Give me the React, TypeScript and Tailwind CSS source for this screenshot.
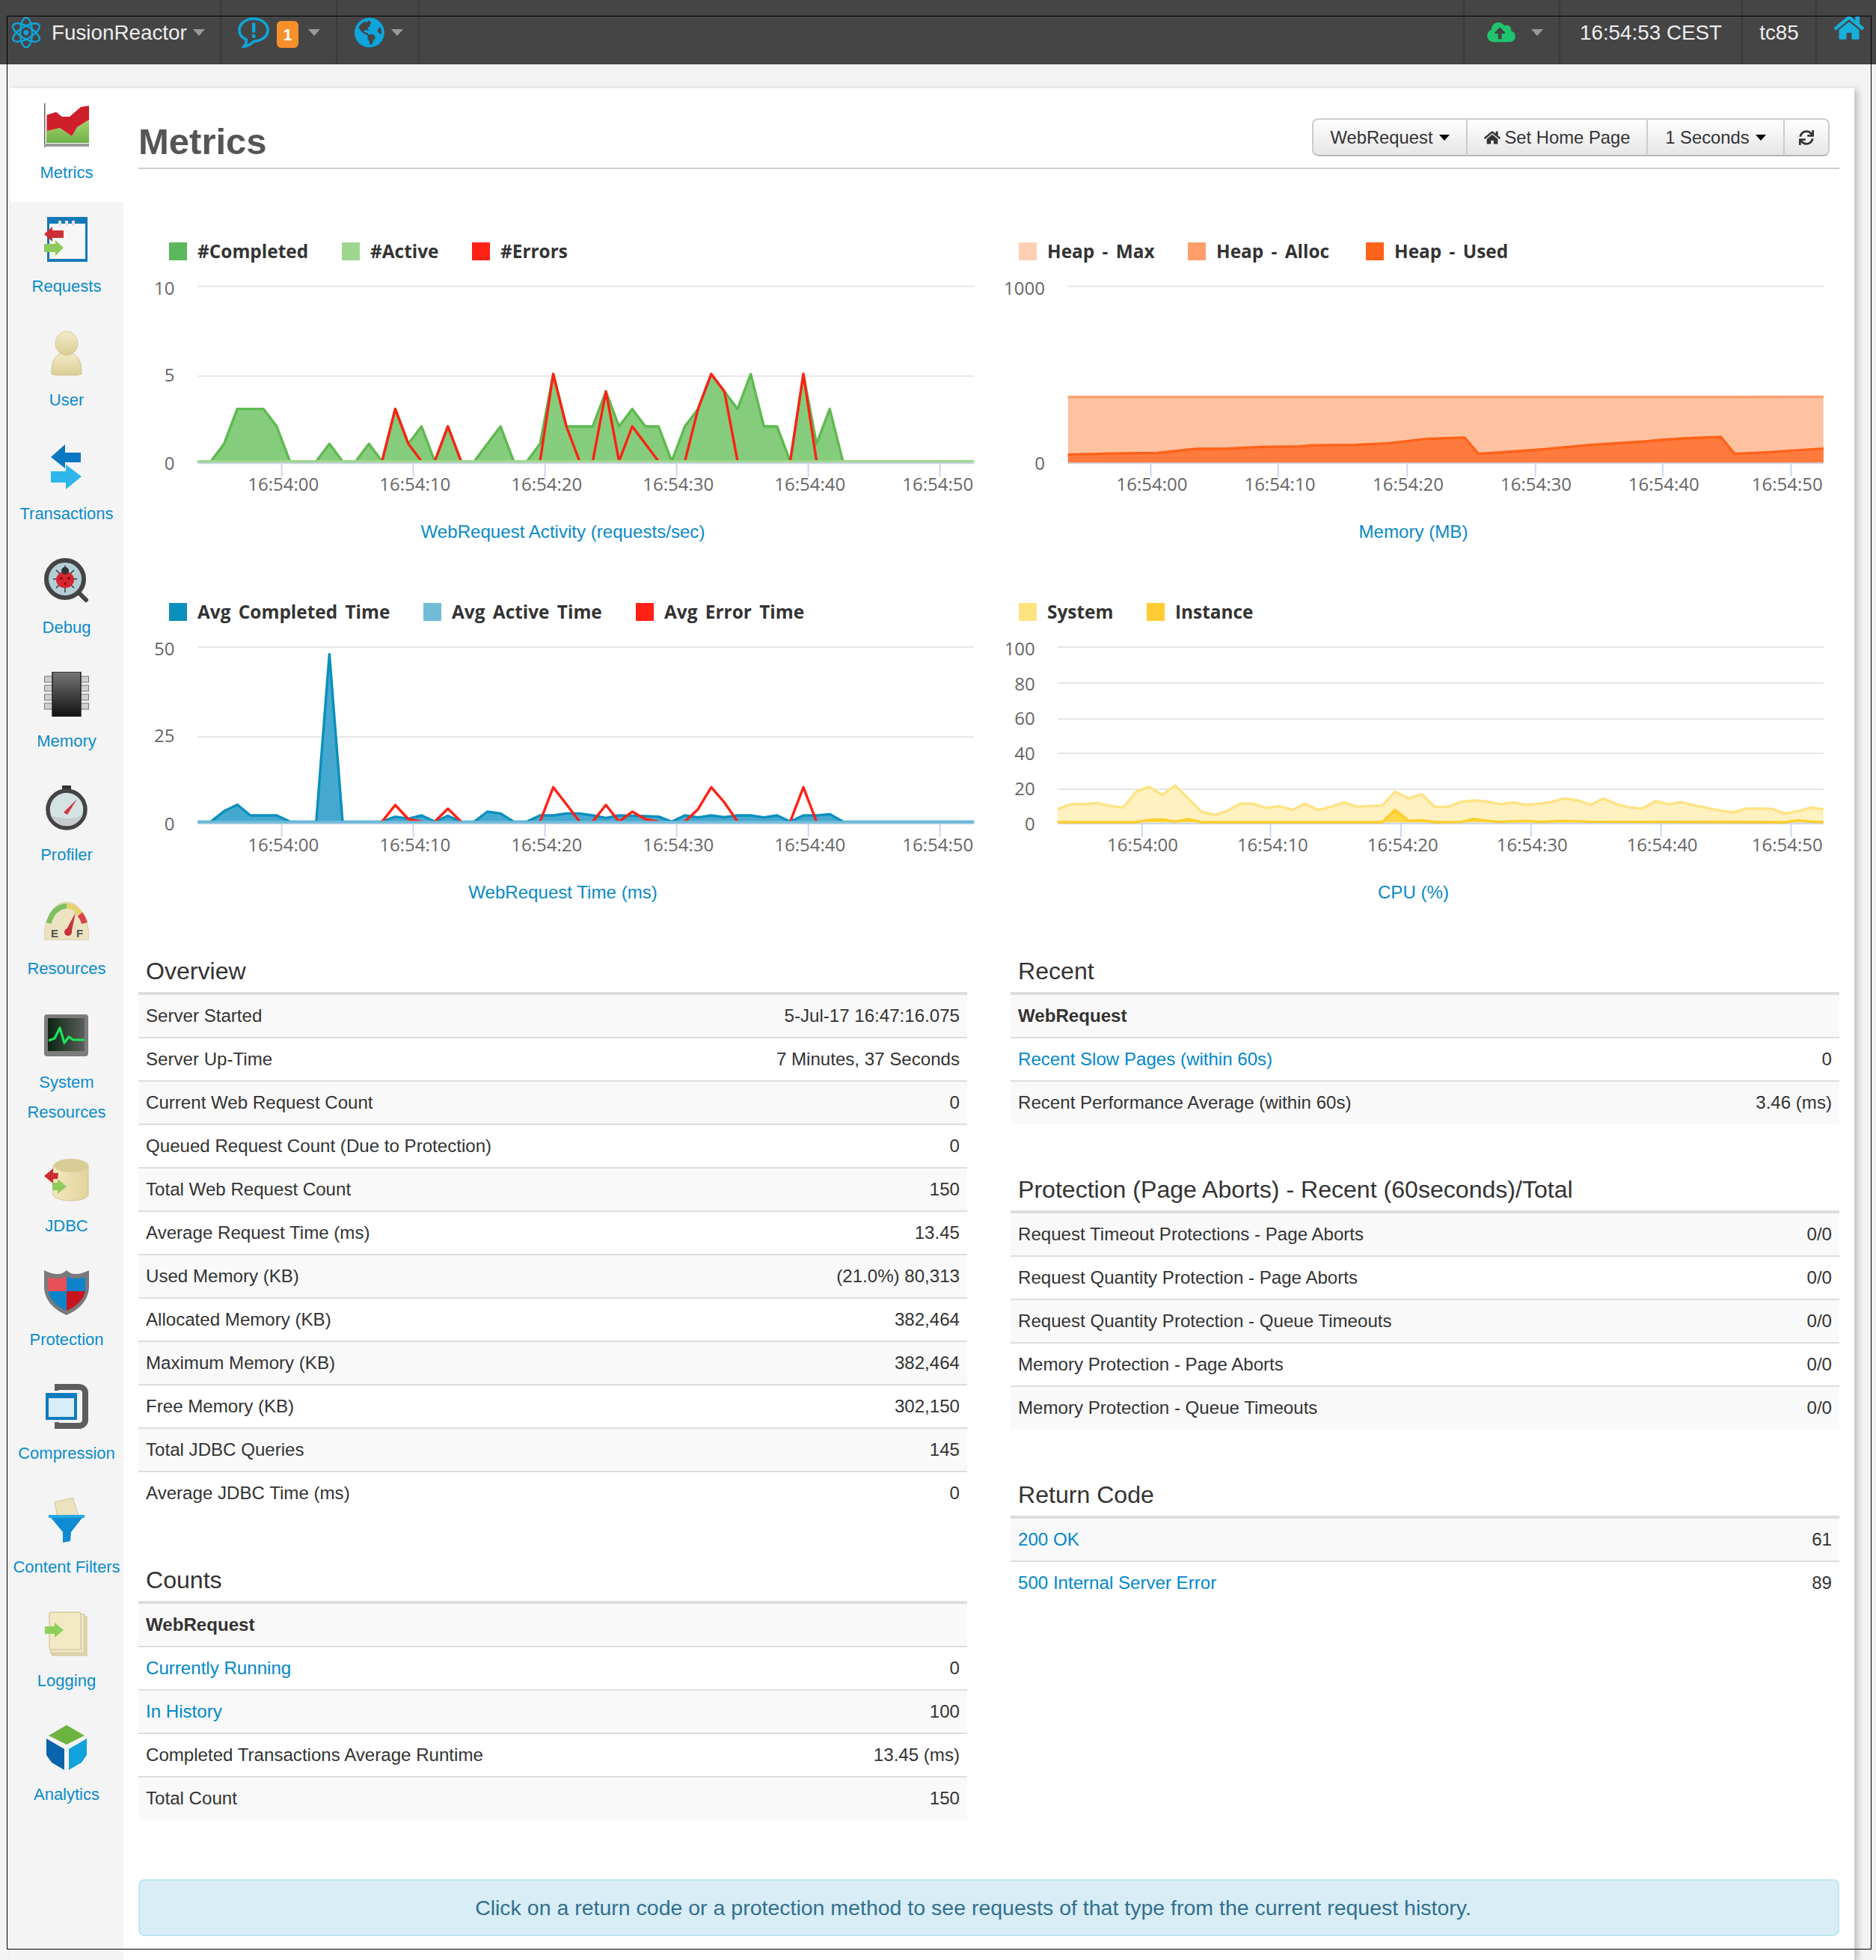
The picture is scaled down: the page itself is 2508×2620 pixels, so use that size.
import React from "react";
import { FaHome, FaSync, FaCloudUploadAlt, FaGlobeAmericas } from "react-icons/fa";

type Pt = [number, number];
const pts = (a: Pt[]) => a.map((p) => p.join(",")).join(" ");
const SX = 1150 / 1568;
const SY = 1 / 3;

function Area({ data, base, fill, line, close = true }: { data: Pt[]; base: number; fill?: string; line: string; close?: boolean }) {
  const first = data[0];
  const last = data[data.length - 1];
  return (
    <g>
      {fill && close && <polygon points={pts([[first[0], base], ...data, [last[0], base]])} fill={fill} />}
      <polyline points={pts(data)} fill="none" stroke={line} strokeWidth={3.4} strokeLinejoin="round" vectorEffect="non-scaling-stroke" />
    </g>
  );
}

type ChartDef = {
  ox: number;
  oy: number;
  top: number;
  cellX: number;
  grids: number[];
  axisY: number;
  x0: number;
  x1: number;
  yLabels: [string, number][];
  yRight: number;
  ticks: number[];
  tickLabels: number[];
  tickTop: number;
  labelY: number;
  width: number;
  children: React.ReactNode;
};

const TIMES = ["16:54:00", "16:54:10", "16:54:20", "16:54:30", "16:54:40", "16:54:50"];

function ChartSvg(c: ChartDef) {
  const mx = (z: number) => c.ox + z * SX;
  const my = (z: number) => c.oy + z * SY;
  return (
    <svg viewBox={`${c.cellX} ${c.top} ${c.width} 330`} className="block h-[330px] w-full">
      {c.grids.map((g) => (
        <line key={g} x1={mx(c.x0)} x2={mx(c.x1)} y1={my(g)} y2={my(g)} stroke="#e6e6e6" strokeWidth={2} />
      ))}
      <line x1={mx(c.x0)} x2={mx(c.x1)} y1={my(c.axisY)} y2={my(c.axisY)} stroke="#ccd6eb" strokeWidth={2.5} />
      {c.ticks.map((t) => (
        <line key={t} x1={mx(t)} x2={mx(t)} y1={my(c.tickTop)} y2={my(c.tickTop + 54)} stroke="#ccd6eb" strokeWidth={2} />
      ))}
      <g transform={`translate(${c.ox} ${c.oy}) scale(${SX} ${SY})`}>{c.children}</g>
      {c.yLabels.map(([t, z]) => (
        <text key={t} x={mx(c.yRight)} y={my(z) + 8} textAnchor="end" className="fill-[#666] [font-family:Open_Sans,sans-serif] text-[24px]">
          {t}
        </text>
      ))}
      {c.tickLabels.map((z, i) => (
        <text key={i} x={mx(z)} y={my(c.labelY) + 8} textAnchor="middle" className="fill-[#666] [font-family:Open_Sans,sans-serif] text-[24px]">
          {TIMES[i]}
        </text>
      ))}
    </svg>
  );
}

function Legend({ items, pl }: { items: [string, string, string][]; pl: string }) {
  return (
    <div className={`flex h-[24px] items-center ${pl}`}>
      {items.map(([color, label, w]) => (
        <div key={label} className={`flex items-center gap-[14px] ${w}`}>
          <span className={`block h-[24px] w-[24px] ${color}`} />
          <span className="whitespace-nowrap [font-family:Open_Sans,sans-serif] text-[24.4px] font-bold leading-[24px] text-[#333] [word-spacing:4px]">{label}</span>
        </div>
      ))}
    </div>
  );
}

function ChartCell({ legend, pl, caption, chart }: { legend: [string, string, string][]; pl: string; caption: string; chart: React.ReactNode }) {
  return (
    <div className="h-[482px] pt-[24px]">
      <Legend items={legend} pl={pl} />
      <div className="mt-[2px]">{chart}</div>
      <div className="mt-[11px] text-center text-[24.1px] leading-[40px] text-[#0a8ac6]">{caption}</div>
    </div>
  );
}

/* ---------- chart data ---------- */
const L1 = (x: number, l: number): Pt => [x, 950 - 70 * l];
const greenLevels = [0,0,1,3,3,3,2,0,0,0,1,0,0,1,0,3,1,2,0,2,0,0,1,2,0,0,1,5,2,2,2,4,2,3,2,2,0,2,3,5,4,3,5,2,2,0,5,1,3,0];
const green: Pt[] = greenLevels.map((l, i) => L1(115 + 24 * i, l));
const redRuns: Pt[][] = [
  [L1(451,0),L1(475,3),L1(499,1),L1(523,0)],
  [L1(547,0),L1(571,2),L1(595,0)],
  [L1(739,0),L1(763,5),L1(787,2),L1(811,0)],
  [L1(835,0),L1(859,4),L1(883,0),L1(907,2),L1(931,1),L1(955,0)],
  [L1(1003,0),L1(1027,3),L1(1051,5),L1(1075,4),L1(1099,0)],
  [L1(1195,0),L1(1219,5),L1(1243,0)],
];

const heapUsed: Pt[] = [[147,923],[245,918],[310,916],[380,900],[430,900],[500,892],[570,890],[590,886],[670,884],[730,878],[800,860],[870,855],[895,920],[1000,904],[1100,884],[1200,870],[1230,864],[1270,858],[1337,852],[1362,920],[1420,914],[1524,899]];

const blue: Pt[] = [[115,955],[139,955],[163,913],[187,887],[211,930],[259,930],[283,955],[331,955],[355,283],[379,955],[451,955],[475,935],[499,943],[523,930],[547,955],[571,932],[595,955],[619,955],[643,915],[667,922],[691,955],[715,955],[739,930],[763,930],[787,922],[811,922],[835,930],[859,940],[883,930],[931,933],[955,935],[979,955],[1003,930],[1027,938],[1051,930],[1075,937],[1099,930],[1123,930],[1147,938],[1171,930],[1195,955],[1219,930],[1243,930],[1267,925],[1291,955],[1530,955]];
const redTime: Pt[][] = [
  [[451,955],[475,888],[499,945],[523,955]],
  [[547,955],[571,903],[595,955]],
  [[739,955],[763,817],[787,885],[811,955]],
  [[835,955],[859,888],[883,955],[907,915],[931,945],[955,955]],
  [[1003,955],[1027,905],[1051,817],[1075,878],[1099,955]],
  [[1195,955],[1219,817],[1243,955]],
];

const sysCpu: Pt[] = [[128,905],[152,885],[176,885],[200,880],[224,892],[248,898],[271,835],[295,815],[319,848],[342,810],[366,862],[390,915],[414,928],[437,912],[461,883],[485,883],[508,900],[532,893],[556,908],[579,883],[603,908],[627,895],[650,878],[674,895],[698,892],[720,890],[743,835],[768,862],[792,845],[815,895],[840,895],[864,875],[888,870],[912,875],[935,885],[959,878],[983,888],[1007,883],[1030,875],[1052,862],[1076,870],[1100,887],[1123,862],[1147,885],[1171,898],[1194,903],[1217,873],[1241,885],[1265,877],[1289,890],[1313,900],[1335,910],[1359,918],[1383,903],[1407,902],[1430,904],[1454,922],[1478,913],[1502,898],[1524,906]];
const instCpu: Pt[] = [[128,957],[250,957],[271,957],[295,948],[319,946],[342,955],[366,945],[390,957],[720,957],[743,908],[768,952],[792,949],[815,957],[864,956],[888,944],[912,952],[935,956],[983,952],[1007,956],[1052,952],[1100,955],[1454,957],[1478,950],[1502,955],[1524,957]];

/* ---------- nav parts ---------- */
function NavCaret({ className = "" }: { className?: string }) {
  return <span className={`block h-0 w-0 border-x-[8px] border-t-[9px] border-x-transparent border-t-[#999] ${className}`} />;
}
function BtnCaret() {
  return <span className="ml-[8px] block h-0 w-0 border-x-[7px] border-t-[8px] border-x-transparent border-t-black" />;
}
function AtomIcon() {
  return (
    <svg viewBox="0 0 40 41" className="h-[41px] w-[40px]" fill="none" stroke="#0ea5dc" strokeWidth={2.4}>
      <ellipse cx="20" cy="20.5" rx="8" ry="20" />
      <ellipse cx="20" cy="20.5" rx="8" ry="20" transform="rotate(60 20 20.5)" />
      <ellipse cx="20" cy="20.5" rx="8" ry="20" transform="rotate(120 20 20.5)" />
      <circle cx="20" cy="20.5" r="3.5" fill="#0ea5dc" stroke="none" />
    </svg>
  );
}
function BubbleIcon() {
  return (
    <svg viewBox="0 0 42 41" className="h-[41px] w-[42px]">
      <path d="M21 2C10.5 2 2 8.8 2 17.2c0 5.6 3.8 10.4 9.4 13 .2 3.2-1.2 6.6-3.4 9.3 5.8-1.4 10.6-4.5 13.4-7.3C31.8 32 40 25.4 40 17.2 40 8.8 31.5 2 21 2z" fill="none" stroke="#0ea5dc" strokeWidth={3.6} />
      <rect x="19" y="7.5" width="4.4" height="13" fill="#0ea5dc" />
      <rect x="19" y="23" width="4.4" height="4.6" fill="#0ea5dc" />
    </svg>
  );
}

/* ---------- sidebar icons ---------- */
const IC = "block h-[60px] w-[60px]";
function IconMetrics() {
  return (
    <svg viewBox="0 0 60 60" className={IC}>
      <defs><linearGradient id="mg" x1="0" y1="0" x2="0" y2="1"><stop offset="0" stopColor="#a6d56a" /><stop offset="1" stopColor="#6fb04a" /></linearGradient></defs>
      <polygon points="3,37 21,33 37,44 44,32 60,22 60,53 3,53" fill="url(#mg)" />
      <polygon points="3.5,15.7 16,11.7 24,18 34,18 49,5 60,3.3 60,22 44,32 37,44 21,33 3.5,37" fill="#cf1f2b" />
      <rect x="0" y="0" width="1.5" height="59" fill="#666" />
      <rect x="0" y="54" width="60" height="4" fill="#9a9a9a" />
    </svg>
  );
}
function IconRequests() {
  return (
    <svg viewBox="0 0 60 60" className={IC}>
      <rect x="4" y="0" width="54" height="60" fill="#1479b8" />
      <rect x="7" y="9" width="48" height="47" fill="#f6f7f6" />
      <rect x="19" y="5" width="4" height="7" fill="#dfe7ea" /><rect x="28" y="5" width="4" height="7" fill="#dfe7ea" /><rect x="37" y="5" width="4" height="7" fill="#dfe7ea" />
      <polygon points="0,23 11,13 11,18 26,18 26,28 11,28 11,33" fill="#cc2f35" />
      <polygon points="26,41 15,31 15,36 0,36 0,47 15,47 15,52" fill="#8fcb5c" />
    </svg>
  );
}
function IconUser() {
  return (
    <svg viewBox="0 0 60 60" className={IC}>
      <defs><linearGradient id="ug" x1="0" y1="0" x2="0" y2="1"><stop offset="0" stopColor="#f3ecc9" /><stop offset="1" stopColor="#d9cb93" /></linearGradient></defs>
      <path d="M10 58c0-14 2-28 20-28s20 14 20 28c-8 3-32 3-40 0z" fill="url(#ug)" stroke="#cfc28b" />
      <ellipse cx="30" cy="17" rx="15" ry="16" fill="url(#ug)" stroke="#d8cc98" />
    </svg>
  );
}
function IconTransactions() {
  return (
    <svg viewBox="0 0 60 60" className={IC}>
      <polygon points="9,17 28,0 28,11 49,11 49,24 28,24 28,32" fill="#0a78c0" />
      <polygon points="50,43 29,60 29,51 9,51 9,36 29,36 29,27" fill="#2fb6ea" />
    </svg>
  );
}
function IconDebug() {
  return (
    <svg viewBox="0 0 60 60" className={IC}>
      <line x1="44" y1="44" x2="56" y2="56" stroke="#444" strokeWidth="6" strokeLinecap="round" />
      <circle cx="28" cy="28" r="25" fill="#b4ced6" stroke="#444" strokeWidth="6" />
      <g stroke="#333" strokeWidth="1.5"><line x1="28" y1="10" x2="28" y2="46" /><line x1="12" y1="28" x2="44" y2="28" /><line x1="16" y1="16" x2="40" y2="40" /><line x1="40" y1="16" x2="16" y2="40" /></g>
      <ellipse cx="28" cy="29" rx="12" ry="11" fill="#d5252f" />
      <circle cx="28" cy="17" r="5" fill="#333" />
      <circle cx="23" cy="27" r="1.6" fill="#600" /><circle cx="33" cy="27" r="1.6" fill="#600" /><circle cx="28" cy="34" r="1.6" fill="#600" />
    </svg>
  );
}
function IconMemory() {
  return (
    <svg viewBox="0 0 60 60" className={IC}>
      <defs><linearGradient id="cg" x1="0" y1="0" x2="0" y2="1"><stop offset="0" stopColor="#777" /><stop offset="1" stopColor="#111" /></linearGradient></defs>
      {[6, 18, 30, 42].map((y) => (
        <g key={y} fill="#cfcfcf" stroke="#777" strokeWidth="1">
          <rect x="0.5" y={y} width="59" height="8" />
        </g>
      ))}
      <rect x="11" y="0" width="38" height="60" fill="url(#cg)" stroke="#222" strokeWidth="1.5" />
    </svg>
  );
}
function IconProfiler() {
  return (
    <svg viewBox="0 0 60 60" className={IC}>
      <rect x="24" y="0" width="12" height="6" fill="#333" />
      <circle cx="30" cy="32" r="25" fill="#d4e2e4" stroke="#444" strokeWidth="5.5" />
      <path d="M8 38c8 8 36 8 44 0-3 10-12 16-22 16S11 48 8 38z" fill="#c6cccd" />
      <polygon points="26,36 44,18 31,39" fill="#d5353b" />
    </svg>
  );
}
function IconResources() {
  return (
    <svg viewBox="0 0 60 60" className={IC}>
      <path d="M0 52C0 26 13 4 30 4s30 22 30 48c0 1-1 2-2 2H2c-1 0-2-1-2-2z" fill="#ece3c2" stroke="#d5ca9f" />
      <path d="M6 32C10 18 18 10 30 9" fill="none" stroke="#7fbf63" strokeWidth="7" />
      <path d="M30 9c8 0 13 3 18 11" fill="none" stroke="#e8d36b" strokeWidth="7" />
      <path d="M48 20c3 4 5 8 6 12" fill="none" stroke="#d9434a" strokeWidth="8" />
      <polygon points="29,42 42,18 36,46" fill="#c8323a" />
      <circle cx="32" cy="44" r="5" fill="#c8323a" />
      <text x="9" y="51" className="fill-[#555] text-[15px] font-bold">E</text>
      <text x="43" y="51" className="fill-[#555] text-[15px] font-bold">F</text>
    </svg>
  );
}
function IconSystem() {
  return (
    <svg viewBox="0 0 60 60" className={IC}>
      <defs><linearGradient id="sg" x1="0" y1="0" x2="1" y2="0"><stop offset="0" stopColor="#0c2412" /><stop offset="1" stopColor="#5a5f5a" /></linearGradient></defs>
      <rect x="0" y="2" width="59" height="56" rx="4" fill="#7c7c7c" />
      <rect x="5" y="7" width="49" height="44" fill="url(#sg)" />
      <polyline points="6,37 14,34 21,20 27,40 33,32 39,36 54,36" fill="none" stroke="#1fe35a" strokeWidth="3.2" strokeLinejoin="round" />
    </svg>
  );
}
function IconJdbc() {
  return (
    <svg viewBox="0 0 60 60" className={IC}>
      <defs><linearGradient id="jg" x1="0" y1="0" x2="1" y2="0"><stop offset="0" stopColor="#f3e7bd" /><stop offset="1" stopColor="#e2d49d" /></linearGradient></defs>
      <path d="M12 12v38c0 5 11 9 24 9s23-4 23-9V12z" fill="url(#jg)" stroke="#cfc28b" />
      <ellipse cx="36" cy="12" rx="23" ry="9" fill="#d8cb96" />
      <polygon points="0,26 12,16 12,22 19,22 18,30 12,30 12,36" fill="#cc2b30" />
      <polygon points="30,40 18,30 18,35 11,35 11,45 18,45 18,50" fill="#8fcb5c" />
    </svg>
  );
}
function IconProtection() {
  return (
    <svg viewBox="0 0 60 60" className={IC}>
      <path d="M0 0c6 3 12 5 18 5 5 0 9-2 12-5 3 3 7 5 12 5 6 0 12-2 18-5v22c0 18-14 31-30 38C14 53 0 40 0 22z" fill="#7a7a7a" />
      <path d="M5 9c5 2 9 2 13 2 5 0 9-2 12-3v20H5z" fill="#e8505a" />
      <path d="M30 8c3 1 7 3 12 3 4 0 8 0 13-2v19H30z" fill="#0f83c9" />
      <path d="M5 28h25v26C18 49 7 39 5 28z" fill="#0f83c9" />
      <path d="M30 28h25c-2 11-13 21-25 26z" fill="#c9131f" />
    </svg>
  );
}
function IconCompression() {
  return (
    <svg viewBox="0 0 60 60" className={IC}>
      <path d="M18 4h28c5 0 9 3 9 8v36c0 5-4 8-9 8H18" fill="none" stroke="#5d5d5d" strokeWidth="8" />
      <rect x="14" y="0" width="5" height="9" fill="#5d5d5d" /><rect x="14" y="51" width="6" height="9" fill="#5d5d5d" />
      <rect x="4" y="14" width="38" height="32" fill="#d9edf8" stroke="#0f7cc0" strokeWidth="4" />
      <rect x="4" y="14" width="38" height="5" fill="#0f7cc0" />
    </svg>
  );
}
function IconFilters() {
  return (
    <svg viewBox="0 0 60 60" className={IC}>
      <polygon points="14,6 38,0 46,24 18,26" fill="#ece2bd" stroke="#d0c491" />
      <polygon points="6,23 54,23 36,46 35,58 25,60 25,46" fill="#0e8bd2" />
      <rect x="6" y="23" width="48" height="4" fill="#29a6e3" />
    </svg>
  );
}
function IconLogging() {
  return (
    <svg viewBox="0 0 60 60" className={IC}>
      <rect x="11" y="7" width="46" height="52" fill="#e4dab3" stroke="#c9bd8c" />
      <rect x="9" y="4" width="45" height="52" fill="#ece3c3" stroke="#c9bd8c" />
      <rect x="7" y="1" width="42" height="50" rx="2" fill="#f2e9c5" stroke="#c9bd8c" />
      <polygon points="26,25 14,15 14,20 1,20 1,30 14,30 14,35" fill="#8dd05a" />
    </svg>
  );
}
function IconAnalytics() {
  return (
    <svg viewBox="0 0 60 60" className={IC}>
      <polygon points="30,0 54,14 30,26 6,14" fill="#6db33f" />
      <polygon points="3,18 27,32 27,60 10,50 3,40" fill="#0a64ad" />
      <polygon points="57,18 33,32 33,60 50,50 57,40" fill="#12a2dc" />
    </svg>
  );
}

const NAV: { label: string[]; icon: React.ReactNode }[] = [
  { label: ["Metrics"], icon: <IconMetrics /> },
  { label: ["Requests"], icon: <IconRequests /> },
  { label: ["User"], icon: <IconUser /> },
  { label: ["Transactions"], icon: <IconTransactions /> },
  { label: ["Debug"], icon: <IconDebug /> },
  { label: ["Memory"], icon: <IconMemory /> },
  { label: ["Profiler"], icon: <IconProfiler /> },
  { label: ["Resources"], icon: <IconResources /> },
  { label: ["System", "Resources"], icon: <IconSystem /> },
  { label: ["JDBC"], icon: <IconJdbc /> },
  { label: ["Protection"], icon: <IconProtection /> },
  { label: ["Compression"], icon: <IconCompression /> },
  { label: ["Content Filters"], icon: <IconFilters /> },
  { label: ["Logging"], icon: <IconLogging /> },
  { label: ["Analytics"], icon: <IconAnalytics /> },
];

/* ---------- tables ---------- */
type Row = { l: string; r?: string; link?: boolean; bold?: boolean };
function Section({ title, rows, first }: { title: string; rows: Row[]; first?: boolean }) {
  return (
    <section className={first ? "" : "mt-[60px]"}>
      <h3 className="flex h-[56px] items-center pl-[10px] text-[32.1px] font-normal leading-[40px] text-[#333]">{title}</h3>
      <div className="border-t-4 border-[#ddd]">
        {rows.map((r, i) => (
          <div key={r.l} className={`flex items-center justify-between px-[10px] pt-[1px] text-[24.1px] text-[#333] ${i > 0 ? "h-[58px] border-t-2 border-[#ddd]" : "h-[56px]"} ${i % 2 === 0 ? "bg-[#f9f9f9]" : "bg-white"}`}>
            <span className={`${r.link ? "text-[#0088cc]" : ""} ${r.bold ? "font-bold" : ""}`}>{r.l}</span>
            {r.r && <span>{r.r}</span>}
          </div>
        ))}
      </div>
    </section>
  );
}

const overview: Row[] = [
  { l: "Server Started", r: "5-Jul-17 16:47:16.075" },
  { l: "Server Up-Time", r: "7 Minutes, 37 Seconds" },
  { l: "Current Web Request Count", r: "0" },
  { l: "Queued Request Count (Due to Protection)", r: "0" },
  { l: "Total Web Request Count", r: "150" },
  { l: "Average Request Time (ms)", r: "13.45" },
  { l: "Used Memory (KB)", r: "(21.0%) 80,313" },
  { l: "Allocated Memory (KB)", r: "382,464" },
  { l: "Maximum Memory (KB)", r: "382,464" },
  { l: "Free Memory (KB)", r: "302,150" },
  { l: "Total JDBC Queries", r: "145" },
  { l: "Average JDBC Time (ms)", r: "0" },
];
const counts: Row[] = [
  { l: "WebRequest", bold: true },
  { l: "Currently Running", r: "0", link: true },
  { l: "In History", r: "100", link: true },
  { l: "Completed Transactions Average Runtime", r: "13.45 (ms)" },
  { l: "Total Count", r: "150" },
];
const recent: Row[] = [
  { l: "WebRequest", bold: true },
  { l: "Recent Slow Pages (within 60s)", r: "0", link: true },
  { l: "Recent Performance Average (within 60s)", r: "3.46 (ms)" },
];
const protection: Row[] = [
  { l: "Request Timeout Protections - Page Aborts", r: "0/0" },
  { l: "Request Quantity Protection - Page Aborts", r: "0/0" },
  { l: "Request Quantity Protection - Queue Timeouts", r: "0/0" },
  { l: "Memory Protection - Page Aborts", r: "0/0" },
  { l: "Memory Protection - Queue Timeouts", r: "0/0" },
];
const returnCode: Row[] = [
  { l: "200 OK", r: "61", link: true },
  { l: "500 Internal Server Error", r: "89", link: true },
];

const BTN = "flex h-full items-center justify-center border-y-2 border-r-2 border-t-[#ccc] border-r-[#ccc] border-b-[#b5b5b5] bg-linear-to-b from-white to-[#e6e6e6] pt-[1px] text-[23.8px] text-[#333]";

export default function App() {
  const baseRow1 = 300;
  const baseRow2 = 780;
  return (
    <div className="relative h-[2620px] overflow-hidden bg-[#f3f3f3] [font-family:Liberation_Sans,Arial,sans-serif]">
      <nav className="flex h-[86px] bg-[#454545] text-[27.8px] text-[#eeeeee]">
        <div className="flex w-[296px] items-center border-r-2 border-[#3a3a3a] pl-[15px]">
          <AtomIcon />
          <span className="ml-[14px] pt-[2px]">FusionReactor</span>
          <NavCaret className="ml-[8px]" />
        </div>
        <div className="flex w-[155px] items-center border-r-2 border-[#3a3a3a] pl-[22px]">
          <BubbleIcon />
          <span className="ml-[10px] mt-[6px] flex h-[36px] w-[29px] items-center justify-center rounded-[6px] bg-[#f78f2a] text-[22px] font-bold text-white">1</span>
          <NavCaret className="ml-[13px]" />
        </div>
        <div className="flex w-[110px] items-center border-r-2 border-[#3a3a3a] pl-[22px]">
          <FaGlobeAmericas className="h-[41px] w-[42px] text-[#0ea5dc]" />
          <NavCaret className="ml-[8px]" />
        </div>
        <div className="flex-1" />
        <div className="flex w-[130px] items-center border-x-2 border-[#3a3a3a] pl-[29px]">
          <FaCloudUploadAlt className="h-[30px] w-[40px] text-[#1fc46f]" />
          <NavCaret className="ml-[20px]" />
        </div>
        <div className="flex w-[244px] items-center justify-center border-r-2 border-[#3a3a3a] pt-[2px]">16:54:53 CEST</div>
        <div className="flex w-[99px] items-center justify-center border-r-2 border-[#3a3a3a] pt-[2px]">tc85</div>
        <div className="w-[79px] pl-[22px] pt-[19px]">
          <FaHome className="h-[36px] w-[42px] text-[#17afdc]" />
        </div>
      </nav>

      <div className="ml-[13px] mr-[29px] mt-[32px] flex h-[2502px] bg-white shadow-[5px_2px_8px_rgba(0,0,0,0.2)]">
        <aside className="w-[152px] shrink-0 bg-[#f4f4f4]">
          {NAV.map((n, i) => (
            <div key={n.label[0] + i} className={`flex flex-col items-center pb-[19px] pt-[20px] ${i === 0 ? "bg-white" : ""}`}>
              {n.icon}
              <div className="mt-[13px] text-center text-[22px] leading-[40px] text-[#0a8ccc]">
                {n.label.map((t) => (
                  <div key={t} className="whitespace-nowrap">{t}</div>
                ))}
              </div>
            </div>
          ))}
        </aside>

        <main className="min-w-0 flex-1 px-[20px]">
          <header className="flex h-[108px] items-start justify-between border-b-2 border-[#ccc]">
            <h1 className="mt-[47px] text-[49px] font-bold leading-[48px] text-[#555]">Metrics</h1>
            <div className="mr-[13px] mt-[40px] flex h-[51px] overflow-hidden rounded-[8px] border-l-2 border-[#ccc]">
              <div className={`${BTN} w-[206px] rounded-l-[8px]`}>WebRequest<BtnCaret /></div>
              <div className={`${BTN} w-[241px] gap-[6px]`}><FaHome className="h-[20px] w-[22px] text-[#333]" />Set Home Page</div>
              <div className={`${BTN} w-[183px]`}>1 Seconds<BtnCaret /></div>
              <div className={`${BTN} w-[60px] rounded-r-[8px]`}><FaSync className="h-[20px] w-[20px] text-[#333]" /></div>
            </div>
          </header>

          <div className="mt-[74px] grid grid-cols-[1135px_1139px]">
            <ChartCell
              pl="pl-[41px]"
              caption="WebRequest Activity (requests/sec)"
              legend={[["bg-[#5cb85c]", "#Completed", "w-[231px]"], ["bg-[#9fd68f]", "#Active", "w-[174px]"], ["bg-[#ff2116]", "#Errors", ""]]}
              chart={
                <ChartSvg ox={180} oy={baseRow1} top={350} cellX={185} width={1135} grids={[248, 608]} axisY={957} x0={115} x1={1530} yRight={73}
                  yLabels={[["10", 258], ["5", 605], ["0", 960]]} ticks={[268, 508, 748, 988, 1228, 1468]} tickLabels={[271, 511, 751, 991, 1231, 1464]} tickTop={958} labelY={1045}>
                  <Area data={green} base={950} fill="#85cd7c" line="#5fb950" />
                  {redRuns.map((r, i) => <Area key={i} data={r} base={950} line="#ff2116" close={false} />)}
                  <Area data={[[115, 950], [1530, 950]]} base={950} line="#9fd68f" close={false} />
                </ChartSvg>
              }
            />
            <ChartCell
              pl="pl-[42px]"
              caption="Memory (MB)"
              legend={[["bg-[#ffcfb3]", "Heap - Max", "w-[226px]"], ["bg-[#ff9e6b]", "Heap - Alloc", "w-[238px]"], ["bg-[#ff6219]", "Heap - Used", ""]]}
              chart={
                <ChartSvg ox={1320} oy={baseRow1} top={350} cellX={1320} width={1139} grids={[248]} axisY={957} x0={147} x1={1524} yRight={105}
                  yLabels={[["1000", 258], ["0", 960]]} ticks={[298, 530, 765, 999, 1231, 1465]} tickLabels={[300, 533, 767, 1000, 1233, 1458]} tickTop={958} labelY={1045}>
                  <polygon points="147,692 1524,690 1524,955 147,955" fill="#ffc2a0" />
                  <Area data={[[147, 692], [880, 692], [1350, 692], [1524, 691]]} base={955} line="#ff9e6b" close={false} />
                  <Area data={heapUsed} base={955} fill="#ff7a3d" line="#ff6219" />
                </ChartSvg>
              }
            />
            <ChartCell
              pl="pl-[41px]"
              caption="WebRequest Time (ms)"
              legend={[["bg-[#0a8fbd]", "Avg Completed Time", "w-[340px]"], ["bg-[#72bcd9]", "Avg Active Time", "w-[284px]"], ["bg-[#ff2116]", "Avg Error Time", ""]]}
              chart={
                <ChartSvg ox={180} oy={baseRow2} top={832} cellX={185} width={1135} grids={[255, 615]} axisY={962} x0={115} x1={1530} yRight={73}
                  yLabels={[["50", 265], ["25", 612], ["0", 965]]} ticks={[268, 508, 748, 988, 1228, 1468]} tickLabels={[271, 511, 751, 991, 1231, 1464]} tickTop={962} labelY={1050}>
                  <Area data={blue} base={955} fill="#45a9cf" line="#0a8fbd" />
                  {redTime.map((r, i) => <Area key={i} data={r} base={955} line="#ff2116" close={false} />)}
                  <Area data={[[115, 957], [1530, 957]]} base={957} line="#72bcd9" close={false} />
                </ChartSvg>
              }
            />
            <ChartCell
              pl="pl-[42px]"
              caption="CPU (%)"
              legend={[["bg-[#ffe380]", "System", "w-[171px]"], ["bg-[#ffcc33]", "Instance", ""]]}
              chart={
                <ChartSvg ox={1320} oy={baseRow2} top={832} cellX={1320} width={1139} grids={[255, 399, 543, 681, 825]} axisY={962} x0={128} x1={1524} yRight={87}
                  yLabels={[["100", 265], ["80", 405], ["60", 542], ["40", 685], ["20", 825], ["0", 965]]} ticks={[282, 516, 754, 991, 1228, 1465]} tickLabels={[283, 520, 757, 993, 1230, 1458]} tickTop={962} labelY={1050}>
                  <Area data={sysCpu} base={958} fill="#fff1c0" line="#ffe282" />
                  <Area data={instCpu} base={958} fill="#ffd84a" line="#ffcd2b" />
                </ChartSvg>
              }
            />
          </div>

          <div className="mt-[6px] grid grid-cols-2 gap-[58px]">
            <div>
              <Section first title="Overview" rows={overview} />
              <Section title="Counts" rows={counts} />
            </div>
            <div>
              <Section first title="Recent" rows={recent} />
              <Section title="Protection (Page Aborts) - Recent (60seconds)/Total" rows={protection} />
              <Section title="Return Code" rows={returnCode} />
            </div>
          </div>

          <div className="mt-[80px] flex h-[76px] items-center justify-center rounded-[8px] border-2 border-[#bce8f1] bg-[#d9edf7] pr-[42px] pt-[1px] text-[28.5px] text-[#31708f]">
            Click on a return code or a protection method to see requests of that type from the current request history.
          </div>
        </main>
      </div>

      <div className="pointer-events-none absolute left-[9px] top-[21px] h-[2585px] w-[2493px] border border-black" />
    </div>
  );
}
